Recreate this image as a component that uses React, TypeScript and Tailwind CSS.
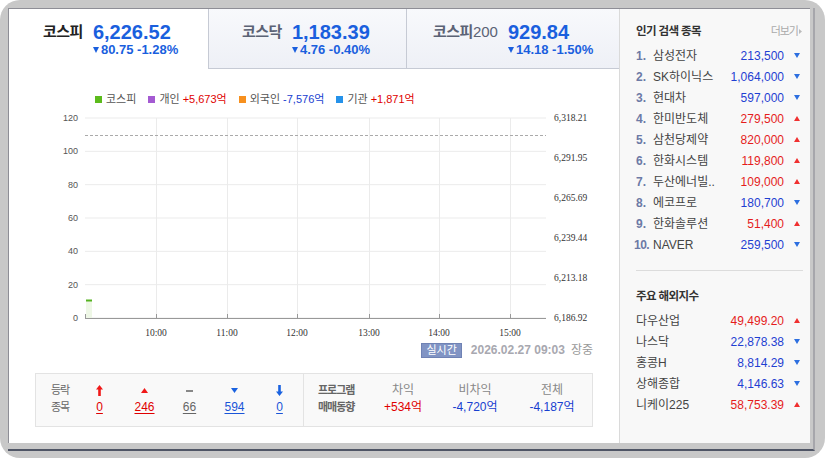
import type { ReactNode } from "react";

const tabs = [
  { label: "코스피", suffix: "", value: "6,226.52", change: "80.75 -1.28%", active: true, pad: "pl-[34px]" },
  { label: "코스닥", suffix: "", value: "1,183.39", change: "4.76 -0.40%", active: false, pad: "pl-[33px]" },
  { label: "코스피", suffix: "200", value: "929.84", change: "14.18 -1.50%", active: false, pad: "pl-[26px]" },
];

const popular = [
  { name: "삼성전자", price: "213,500", up: false },
  { name: "SK하이닉스", price: "1,064,000", up: false },
  { name: "현대차", price: "597,000", up: false },
  { name: "한미반도체", price: "279,500", up: true },
  { name: "삼천당제약", price: "820,000", up: true },
  { name: "한화시스템", price: "119,800", up: true },
  { name: "두산에너빌..", price: "109,000", up: true },
  { name: "에코프로", price: "180,700", up: false },
  { name: "한화솔루션", price: "51,400", up: true },
  { name: "NAVER", price: "259,500", up: false },
];

const overseas = [
  { name: "다우산업", value: "49,499.20", up: true },
  { name: "나스닥", value: "22,878.38", up: false },
  { name: "홍콩H", value: "8,814.29", up: false },
  { name: "상해종합", value: "4,146.63", up: false },
  { name: "니케이225", value: "58,753.39", up: true },
];

function Tri({ up, color, w = 6, h = 5 }: { up: boolean; color: string; w?: number; h?: number }) {
  return (
    <svg width={w} height={h} viewBox={`0 0 ${w} ${h}`} className="shrink-0">
      <path d={up ? `M${w / 2} 0L${w} ${h}H0z` : `M0 0H${w}L${w / 2} ${h}z`} fill={color} />
    </svg>
  );
}

function Chart() {
  const left = 76;
  const right = 537;
  const top = 10;
  const bottom = 210;
  const rows = [0, 1, 2, 3, 4, 5, 6].map((i) => top + (i * (bottom - top)) / 6);
  const leftLabels = ["120", "100", "80", "60", "40", "20", "0"];
  const rightLabels = ["6,318.21", "6,291.95", "6,265.69", "6,239.44", "6,213.18", "6,186.92"];
  const cols = [147, 218, 288, 360, 430, 501];
  const times = ["10:00", "11:00", "12:00", "13:00", "14:00", "15:00"];

  return (
    <svg width="610" height="232" className="mt-[1px] block">
      {rows.map((y, i) => (
        <g key={y}>
          <line x1={left} x2={right} y1={y} y2={y} stroke="#ebebeb" />
          <text x="69" y={y + 3} textAnchor="end" fontSize="9" fill="#555" fontFamily="Liberation Sans, sans-serif">
            {leftLabels[i]}
          </text>
        </g>
      ))}
      {cols.map((x, i) => (
        <g key={x}>
          <line x1={x + 0.5} x2={x + 0.5} y1={top} y2={bottom} stroke="#ebebeb" />
          <line x1={x + 0.5} x2={x + 0.5} y1={bottom - 4} y2={bottom} stroke="#999" />
          <text x={x} y="228" textAnchor="middle" fontSize="9.5" fill="#333" fontFamily="Liberation Serif, serif">
            {times[i]}
          </text>
        </g>
      ))}
      {rightLabels.map((label, i) => (
        <text key={label} x="545" y={top + i * 40 + 3} fontSize="9.5" fill="#333" fontFamily="Liberation Serif, serif">
          {label}
        </text>
      ))}
      <line x1={left} x2={right} y1="27.5" y2="27.5" stroke="#aaa" strokeDasharray="3 2" />
      <line x1={left} x2={right} y1={bottom + 0.5} y2={bottom + 0.5} stroke="#999" />
      <line x1={left + 0.5} x2={left + 0.5} y1={bottom - 4} y2={bottom} stroke="#999" />
      <rect x="77" y="193" width="6" height="17" fill="#eef7e6" />
      <line x1="77" x2="83" y1="192.5" y2="192.5" stroke="#55b220" strokeWidth="2" />
    </svg>
  );
}

function LegendItem({ color, label, value, valueColor }: { color: string; label: string; value?: string; valueColor?: string }) {
  return (
    <span className="flex items-center">
      <span className={`mr-[4px] h-[7px] w-[7px] ${color}`} />
      <span className="text-[#555]">{label}</span>
      {value ? <span className={`ml-[3px] ${valueColor}`}>{value}</span> : null}
    </span>
  );
}

function StatCol({ icon, value, color }: { icon: ReactNode; value: string; color: string }) {
  return (
    <div className="flex w-[45px] flex-col items-center">
      <div className="flex h-[17px] items-center">{icon}</div>
      <div className={`h-[17px] leading-[17px] underline underline-offset-2 ${color}`}>{value}</div>
    </div>
  );
}

function ProgramCol({ label, value, color, width }: { label: string; value: string; color: string; width: string }) {
  return (
    <div className={`flex flex-col items-center ${width}`}>
      <div className="h-[17px] leading-[17px] text-[#888]">{label}</div>
      <div className={`h-[17px] leading-[17px] ${color}`}>{value}</div>
    </div>
  );
}

export default function App() {
  return (
    <div className="h-[458px] w-[825px] bg-white font-['Liberation_Sans','Noto_Sans_CJK_KR',sans-serif]">
      <div className="h-full w-full rounded-[20px] bg-[#c8c8c8] pl-[8px] pt-[8px]">
        <div className="h-[443px] w-[807px] border-b-2 border-r-2 border-b-[#4f5565] border-r-[#a6a6ab] pb-[6px] pr-[3px]">
          <div className="flex h-full w-full border-l border-t border-[#8e8e96] bg-white">
            {/* left: indices + chart */}
            <div className="flex w-[610px] flex-col">
              <div className="flex h-[60px]">
                {tabs.map((tab, i) => (
                  <div
                    key={tab.value}
                    className={`flex h-full items-start pt-[13px] ${tab.pad} ${
                      tab.active
                        ? "w-[199px] bg-white"
                        : `border-b border-l border-[#c6cad4] bg-gradient-to-b from-[#f8f9fc] to-[#eef0f6] ${i === 1 ? "w-[198px]" : "flex-1"}`
                    }`}
                  >
                    <div
                      className={`h-[20px] text-[15px] font-bold leading-[20px] tracking-[-0.5px] ${
                        tab.active ? "text-[#222]" : "text-[#5b6275]"
                      }`}
                    >
                      {tab.label}
                      {tab.suffix ? <span className="font-normal tracking-normal">{tab.suffix}</span> : null}
                    </div>
                    <div className="ml-[10px] flex flex-col">
                      <div className="h-[20px] text-[20px] font-bold leading-[20px] text-[#1a5fde]">{tab.value}</div>
                      <div className="flex h-[15px] items-center text-[13px] font-bold leading-[15px] text-[#1a5fde]">
                        <Tri up={false} color="#1a5fde" w={6} h={6} />
                        <span className="ml-[2px]">{tab.change}</span>
                      </div>
                    </div>
                  </div>
                ))}
              </div>

              <div className="mt-[22px] flex h-[16px] gap-[12px] pl-[86px] text-[11px] leading-[16px]">
                <LegendItem color="bg-[#5cbb1c]" label="코스피" />
                <LegendItem color="bg-[#a45ad2]" label="개인" value="+5,673억" valueColor="text-[#e00000]" />
                <LegendItem color="bg-[#f7901e]" label="외국인" value="-7,576억" valueColor="text-[#1740d0]" />
                <LegendItem color="bg-[#2592ea]" label="기관" value="+1,871억" valueColor="text-[#e00000]" />
              </div>

              <Chart />

              <div className="mt-[3px] flex h-[14px] items-center justify-end pr-[26px] text-[12px]">
                <span className="flex h-[15px] items-center border border-[#6f82b4] bg-[#8194c4] px-[4px] text-[11px] text-white">
                  실시간
                </span>
                <span className="ml-[9px] font-bold text-[#a8a8b0]">2026.02.27 09:03</span>
                <span className="ml-[6px] text-[#999]">장중</span>
              </div>

              <div className="ml-[26px] mt-[16px] flex h-[54px] w-[558px] border border-[#e3e3e3] bg-[#f9f9f9] text-[12px]">
                <div className="flex w-[268px] pl-[15px] pt-[8px]">
                  <div className="w-[26px] text-[11px] leading-[17px] tracking-[-1px] text-[#666]">
                    <div>등락</div>
                    <div>종목</div>
                  </div>
                  <StatCol
                    color="text-[#e00000]"
                    value="0"
                    icon={
                      <svg width="7" height="11" viewBox="0 0 7 11">
                        <path d="M3.5 0L7 4.5H4.8V11H2.2V4.5H0z" fill="#f01818" />
                      </svg>
                    }
                  />
                  <StatCol color="text-[#e00000]" value="246" icon={<Tri up color="#f01818" w={7} h={5} />} />
                  <StatCol
                    color="text-[#666]"
                    value="66"
                    icon={<span className="block h-[2px] w-[7px] bg-[#888]" />}
                  />
                  <StatCol color="text-[#1a55d8]" value="594" icon={<Tri up={false} color="#1a62e0" w={7} h={5} />} />
                  <StatCol
                    color="text-[#1a55d8]"
                    value="0"
                    icon={
                      <svg width="7" height="11" viewBox="0 0 7 11">
                        <path d="M3.5 11L7 6.5H4.8V0H2.2V6.5H0z" fill="#1a62e0" />
                      </svg>
                    }
                  />
                </div>
                <div className="flex flex-1 border-l border-[#e3e3e3] pl-[14px] pt-[8px]">
                  <div className="w-[50px] text-[11px] font-bold leading-[17px] tracking-[-1px] text-[#666]">
                    <div>프로그램</div>
                    <div>매매동향</div>
                  </div>
                  <ProgramCol label="차익" value="+534억" color="text-[#e00000]" width="w-[70px]" />
                  <ProgramCol label="비차익" value="-4,720억" color="text-[#1740d0]" width="w-[74px]" />
                  <ProgramCol label="전체" value="-4,187억" color="text-[#1740d0]" width="w-[80px]" />
                </div>
              </div>
            </div>

            {/* right: sidebar */}
            <div className="flex flex-1 flex-col border-l border-[#dadada] bg-[#f8f8f8] pl-[16px] pr-[10px] pt-[14px] text-[12px]">
              <div className="flex h-[16px] items-center justify-between leading-[16px]">
                <span className="text-[11.5px] font-bold tracking-[-0.6px] text-[#333]">인기 검색 종목</span>
                <span className="-mr-[2px] flex items-center text-[11px] tracking-[-1px] text-[#aaa]">
                  더보기
                  <svg width="3" height="5" viewBox="0 0 3 5" className="ml-[1px]">
                    <path d="M0 0L3 2.5L0 5z" fill="#bbb" />
                  </svg>
                </span>
              </div>
              <div className="mt-[6px] flex flex-col">
                {popular.map((item, i) => (
                  <div key={item.name} className="flex h-[21px] items-center">
                    <span className={`w-[17px] font-bold text-[#6c7aa6] ${i === 9 ? "-ml-[2px] mr-[2px] tracking-[-0.5px]" : ""}`}>
                      {i + 1}.
                    </span>
                    <span className="flex-1 text-[#444]">{item.name}</span>
                    <span className={item.up ? "text-[#e51c1c]" : "text-[#1f3fd2]"}>{item.price}</span>
                    <span className="ml-[10px] flex w-[6px] justify-center">
                      <Tri up={item.up} color={item.up ? "#f03030" : "#2d6fe0"} />
                    </span>
                  </div>
                ))}
              </div>
              <div className="-mr-[3px] mt-[15px] border-t border-[#dcdcdc]" />
              <div className="mt-[17px] h-[16px] text-[11.5px] font-bold leading-[16px] tracking-[-0.6px] text-[#333]">
                주요 해외지수
              </div>
              <div className="mt-[6px] flex flex-col">
                {overseas.map((item) => (
                  <div key={item.name} className="flex h-[21px] items-center">
                    <span className="flex-1 text-[#444]">{item.name}</span>
                    <span className={item.up ? "text-[#e51c1c]" : "text-[#1f3fd2]"}>{item.value}</span>
                    <span className="ml-[10px] flex w-[6px] justify-center">
                      <Tri up={item.up} color={item.up ? "#f03030" : "#2d6fe0"} />
                    </span>
                  </div>
                ))}
              </div>
            </div>
          </div>
        </div>
      </div>
    </div>
  );
}
